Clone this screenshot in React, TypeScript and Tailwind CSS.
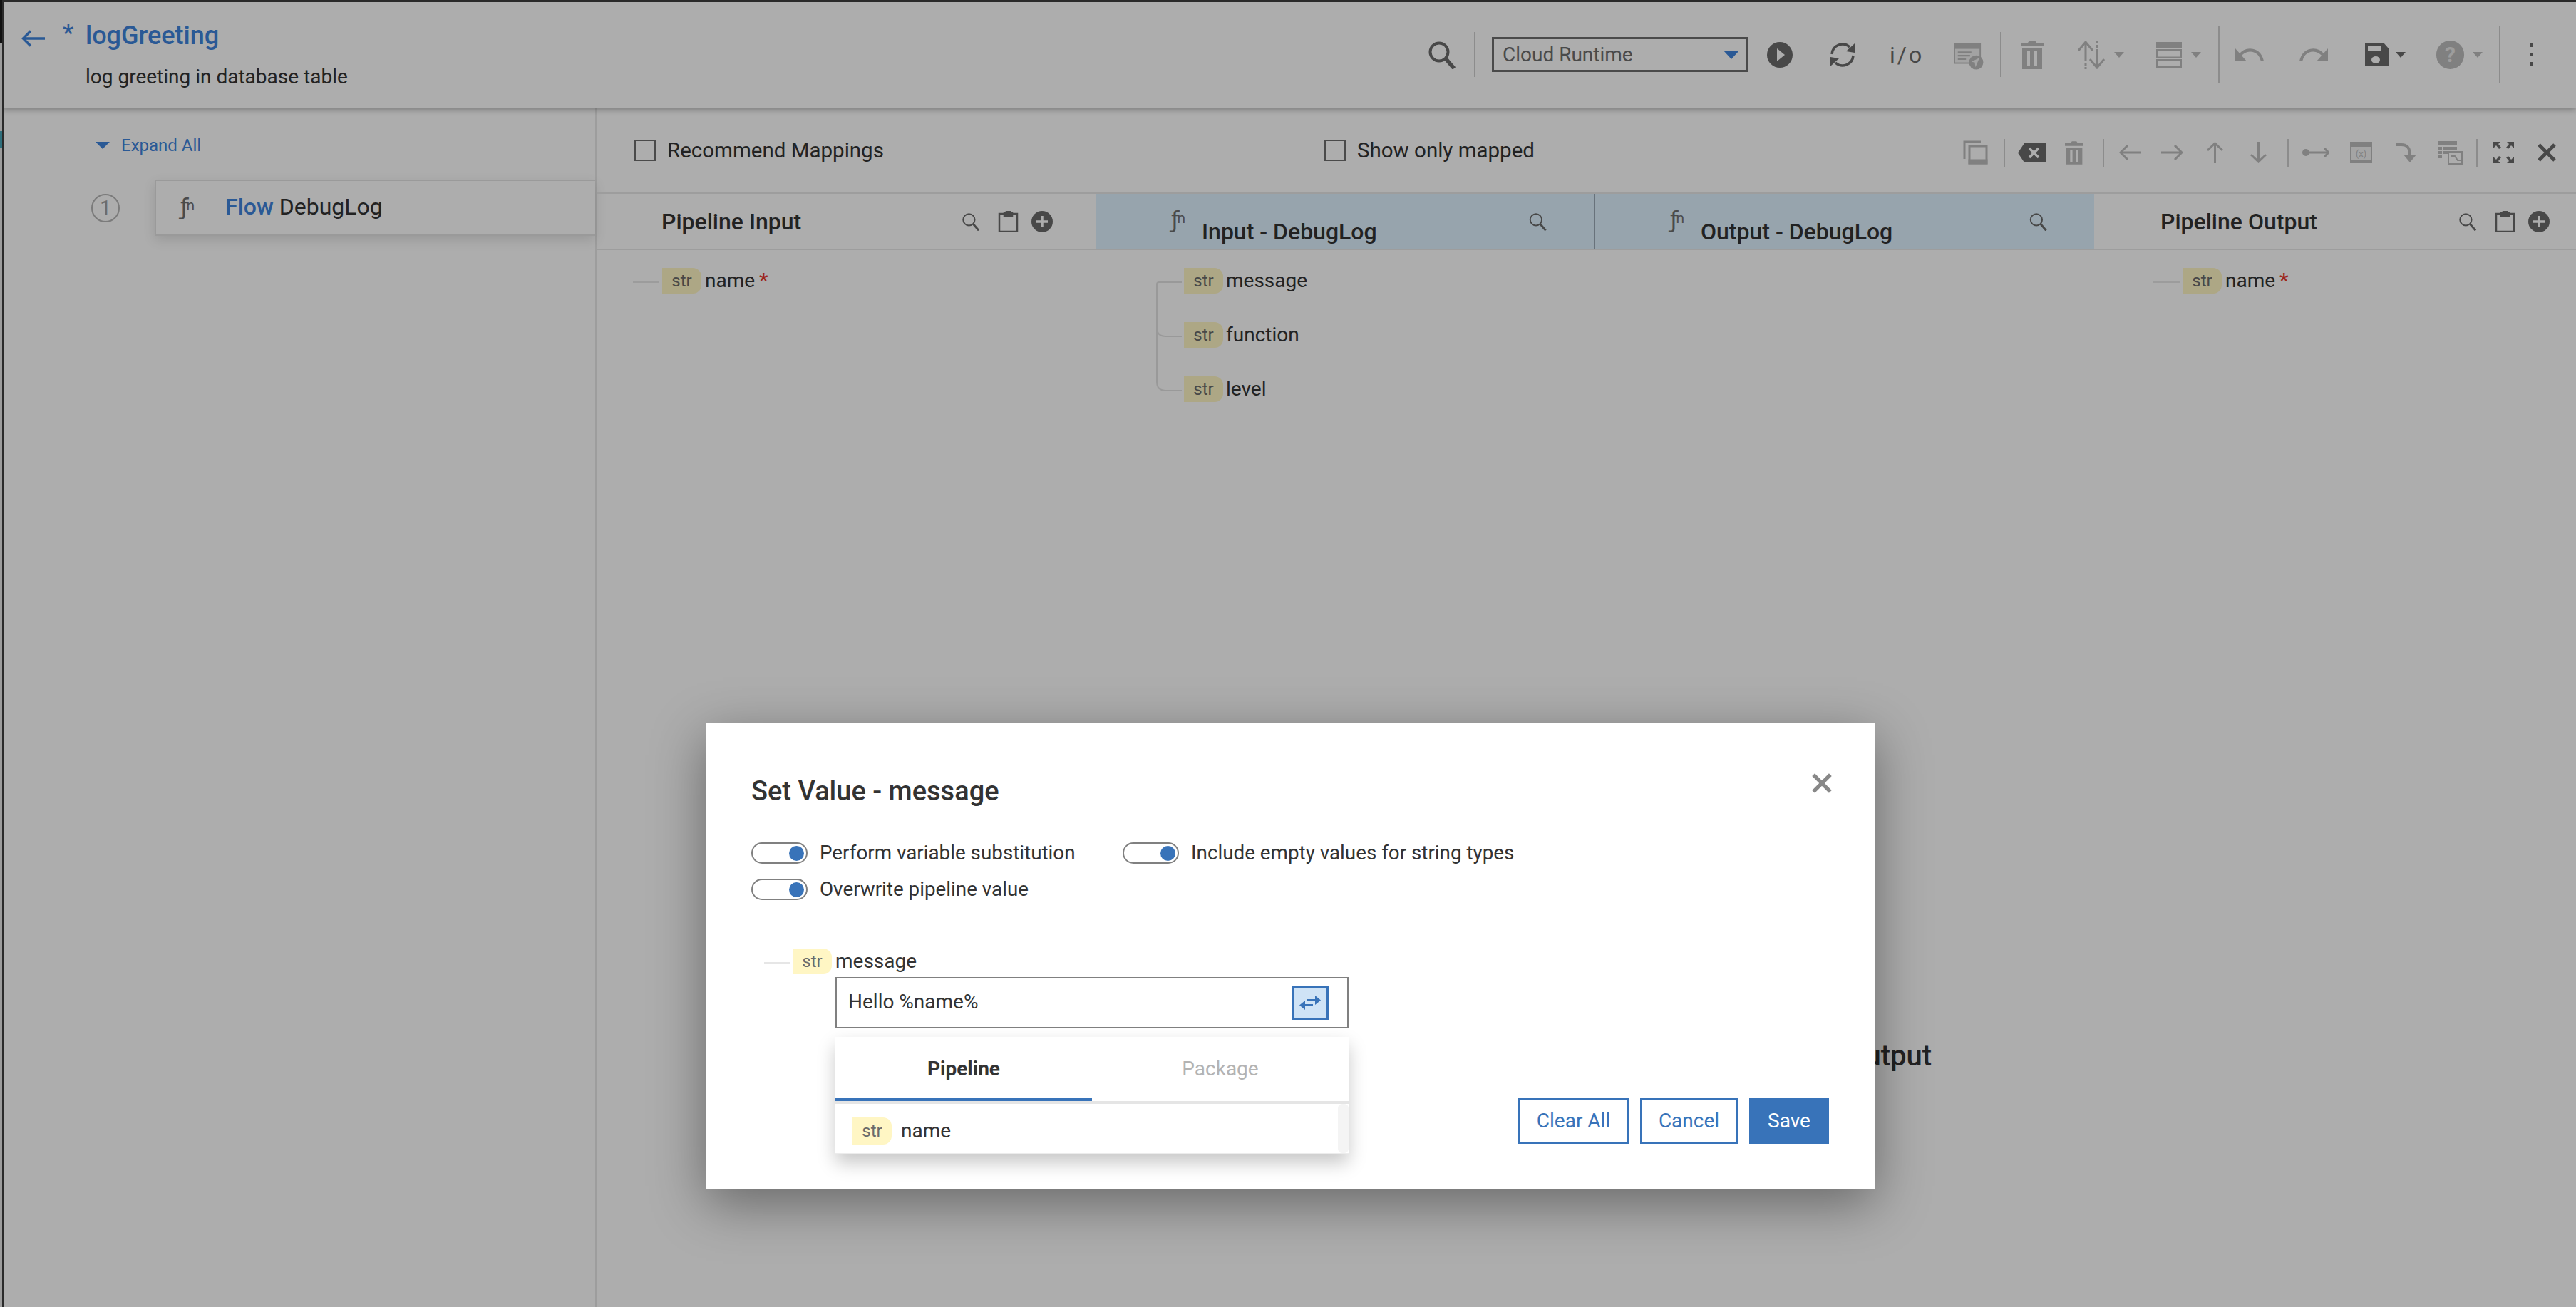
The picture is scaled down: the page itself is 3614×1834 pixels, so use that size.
import React from 'react';

type IconProps = { className?: string };

const DARK = '#6b6b6b';
const MUTED = '#bdbdbd';

const SearchIcon = ({ className, color = DARK, sw = 4 }: IconProps & { color?: string; sw?: number }) => (
    <svg className={className} viewBox="0 0 40 40" fill="none" stroke={color}>
        <circle cx="16" cy="16" r="12.5" strokeWidth={sw} />
        <path d="M25 25 L37 39" strokeWidth={sw + 1.5} />
    </svg>
);

const PlayIcon = ({ className }: IconProps) => (
    <svg className={className} viewBox="0 0 36 36">
        <circle cx="18" cy="18" r="18" fill={DARK} />
        <path d="M14 9 L25 18 L14 27 Z" fill="#ffffff" />
    </svg>
);

const RefreshIcon = ({ className }: IconProps) => (
    <svg className={className} viewBox="0 0 36 38">
        <path d="M3 18 A15 15 0 0 1 28 8" fill="none" stroke={DARK} strokeWidth="3.5" />
        <path d="M35 3 L35 16 L23 14 Z" fill={DARK} />
        <path d="M33 20 A15 15 0 0 1 8 30" fill="none" stroke={DARK} strokeWidth="3.5" />
        <path d="M1 35 L1 22 L13 24 Z" fill={DARK} />
    </svg>
);

const DeployIcon = ({ className }: IconProps) => (
    <svg className={className} viewBox="0 0 43 40">
        <rect x="0" y="0" width="40" height="30" fill={MUTED} />
        <rect x="2" y="8" width="36" height="20" fill="#f0f0f0" />
        <path d="M6 13 H26 M6 18 H24 M6 23 H18" stroke={MUTED} strokeWidth="2.5" />
        <circle cx="33" cy="28" r="10.5" fill={MUTED} />
        <path d="M38 21 L32 35 L31 28 L26 27 Z" fill="#f0f0f0" />
    </svg>
);

const TrashIcon = ({ className }: IconProps) => (
    <svg className={className} viewBox="0 0 32 40" fill={MUTED}>
        <path d="M12 0 H20 L22 3 H32 V8 H0 V3 H10 Z" />
        <path fillRule="evenodd" d="M2 11 H30 V40 H2 Z M9 15 V36 H13 V15 Z M19 15 V36 H23 V15 Z" />
    </svg>
);

const SortIcon = ({ className }: IconProps) => (
    <svg className={className} viewBox="0 0 39 40" fill="none" stroke={MUTED} strokeWidth="3">
        <path d="M11 3 V28" />
        <path d="M1 14 L11 2 L21 14" />
        <path d="M11 31 V40" strokeDasharray="4 2" />
        <path d="M27 0 V10" strokeDasharray="4 2" />
        <path d="M27 12 V37" />
        <path d="M17 26 L27 38 L37 26" />
    </svg>
);

const Caret = ({ className, color = MUTED }: IconProps & { color?: string }) => (
    <svg className={className} viewBox="0 0 14 8" preserveAspectRatio="none">
        <path d="M0 0 H14 L7 8 Z" fill={color} />
    </svg>
);

const RowsIcon = ({ className }: IconProps) => (
    <svg className={className} viewBox="0 0 36 36">
        <rect x="0" y="0" width="36" height="8" fill={MUTED} />
        <rect x="1" y="11" width="34" height="10.5" fill="none" stroke={MUTED} strokeWidth="2" />
        <rect x="1" y="25" width="34" height="10" fill="none" stroke={MUTED} strokeWidth="2" />
    </svg>
);

const UndoIcon = ({ className, flip }: IconProps & { flip?: boolean }) => (
    <svg className={className} viewBox="0 0 40 18">
        <g transform={flip ? 'translate(40 0) scale(-1 1)' : undefined}>
            <path d="M0 0 L0 18 L16 18 Z" fill={MUTED} />
            <path d="M6 10 C16 -2 34 0 38 18" fill="none" stroke={MUTED} strokeWidth="4" />
        </g>
    </svg>
);

const SaveIcon = ({ className }: IconProps) => (
    <svg className={className} viewBox="0 0 33 33">
        <path d="M0 0 H26 L33 8 V33 H0 Z" fill={DARK} />
        <rect x="4" y="4" width="19" height="8" fill="#ffffff" />
        <ellipse cx="15" cy="24" rx="6" ry="5" fill="#ffffff" />
    </svg>
);

const ClipboardIcon = ({ className }: IconProps) => (
    <svg className={className} viewBox="0 0 29 30" fill="none" stroke={DARK} strokeWidth="2.5">
        <rect x="2" y="4" width="25" height="25" />
        <path d="M9 3 H12 V1 H17 V3 H20 V7 H9 Z" fill={DARK} />
    </svg>
);

const PlusIcon = ({ className }: IconProps) => (
    <svg className={className} viewBox="0 0 30 30">
        <circle cx="15" cy="15" r="15" fill={DARK} />
        <path d="M15 7 V23 M7 15 H23" stroke="#ffffff" strokeWidth="3.5" />
    </svg>
);

const CopyIcon = ({ className }: IconProps) => (
    <svg className={className} viewBox="0 0 35 34" fill="none" stroke={MUTED} strokeWidth="3">
        <path d="M2 26 V2 H25" />
        <rect x="9" y="8" width="24" height="24" />
        <path d="M9 28 H33 V32 H9 Z" fill={MUTED} />
    </svg>
);

const BackspaceIcon = ({ className }: IconProps) => (
    <svg className={className} viewBox="0 0 39 27">
        <path d="M9 0 H39 V27 H9 L0 13.5 Z" fill={DARK} />
        <path d="M16 7 L29 20 M29 7 L16 20" stroke="#ffffff" strokeWidth="3.5" />
    </svg>
);

const HArrow = ({ className, d }: IconProps & { d: string }) => (
    <svg className={className} viewBox="0 0 31 22" fill="none" stroke={MUTED} strokeWidth="3">
        <path d={d} />
    </svg>
);

const VArrow = ({ className, d }: IconProps & { d: string }) => (
    <svg className={className} viewBox="0 0 25 30" fill="none" stroke={MUTED} strokeWidth="3">
        <path d={d} />
    </svg>
);

const LinkIcon = ({ className }: IconProps) => (
    <svg className={className} viewBox="0 0 37 12">
        <circle cx="5" cy="6" r="5" fill={MUTED} />
        <path d="M5 6 H34" stroke={MUTED} strokeWidth="3" />
        <path d="M31 0 L37 6 L31 12" fill="none" stroke={MUTED} strokeWidth="3" />
    </svg>
);

const VariableIcon = ({ className }: IconProps) => (
    <svg className={className} viewBox="0 0 31 30">
        <rect x="0" y="0" width="31" height="30" fill={MUTED} />
        <rect x="2" y="7" width="27" height="18" fill="#f2f2f2" />
        <text x="15.5" y="21" textAnchor="middle" fontSize="13" fontFamily="Roboto, sans-serif" fill={MUTED}>(x)</text>
    </svg>
);

const CurveIcon = ({ className }: IconProps) => (
    <svg className={className} viewBox="0 0 30 28">
        <path d="M0 3 H8 C17 3 20 8 20 18" fill="none" stroke={MUTED} strokeWidth="4" />
        <path d="M11 17 H29 L20 28 Z" fill={MUTED} />
    </svg>
);

const TableIcon = ({ className }: IconProps) => (
    <svg className={className} viewBox="0 0 34 33">
        <path d="M0 0 H26 V6 H0 Z M0 8 H5 V12 H0 Z M7 8 H26 V12 H7 Z M0 14 H5 V18 H0 Z M7 14 H15 V18 H7 Z M0 20 H5 V24 H0 Z" fill={MUTED} />
        <rect x="14" y="15" width="19" height="17" fill="#ffffff" stroke={MUTED} strokeWidth="2" />
        <path d="M18 21 L23 21 L27 27 L31 27" fill="none" stroke={MUTED} strokeWidth="2" />
    </svg>
);

const ExpandIcon = ({ className }: IconProps) => (
    <svg className={className} viewBox="0 0 29 30" fill={DARK}>
        <path d="M0 0 H10 L7 3 L11 8 L8 10 L4 5 L0 9 Z" />
        <path d="M29 0 H19 L22 3 L18 8 L21 10 L25 5 L29 9 Z" />
        <path d="M0 30 H10 L7 27 L11 22 L8 20 L4 25 L0 21 Z" />
        <path d="M29 30 H19 L22 27 L18 22 L21 20 L25 25 L29 21 Z" />
    </svg>
);

const CloseIcon = ({ className, color = DARK, sw = 5 }: IconProps & { color?: string; sw?: number }) => (
    <svg className={className} viewBox="0 0 26 26" fill="none" stroke={color} strokeWidth={sw}>
        <path d="M2 2 L24 24 M24 2 L2 24" />
    </svg>
);

const SwapIcon = ({ className }: IconProps) => (
    <svg className={className} viewBox="0 0 32 24" fill="#3873b9">
        <path d="M12 7 H23 V2 L31 8.5 L23 15 V10 H12 Z" />
        <path d="M20 14 H9 V9 L1 15.5 L9 22 V17 H20 Z" />
    </svg>
);

const FnIcon = ({ className }: IconProps) => (
    <span className={`flex items-start text-[#6e6e6e] font-['DejaVu_Sans',sans-serif] ${className ?? ''}`}>
        <span className="text-[32px] leading-[32px]">ƒ</span>
        <span className="text-[19px] leading-[20px] mt-[4px] -ml-[3px]">n</span>
    </span>
);

const Divider = ({ className }: IconProps) => <span className={`w-[2px] bg-[#cfcfcf] ${className ?? ''}`} />;

const Str = ({ className }: IconProps) => (
    <span className={`w-[55px] h-[36px] flex items-center justify-center rounded-r-[12px] bg-[#fff6c4] text-[24px] text-[#6b6b6b] ${className ?? ''}`}>str</span>
);

const Toggle = ({ label, className }: IconProps & { label: string }) => (
    <div className={`flex items-center ${className ?? ''}`}>
        <span className="w-[79px] h-[30px] rounded-full border-2 border-[#808080] flex items-center justify-end pr-[3px]">
            <span className="w-[21px] h-[21px] rounded-full bg-[#3873b9]" />
        </span>
        <span className="ml-[17px] text-[27.8px] leading-[32px] text-[#333]">{label}</span>
    </div>
);

const Checkbox = ({ label, className }: IconProps & { label: string }) => (
    <label className={`flex items-center ${className ?? ''}`}>
        <span className="w-[30px] h-[30px] border-2 border-[#6e6e6e] bg-white" />
        <span className="ml-[16px] text-[29.5px] leading-[36px] text-[#333]">{label}</span>
    </label>
);

const ColHeader = ({ title, pl }: { title: string; pl: string }) => (
    <div className={`h-full flex items-center bg-[#dff2ff] ${pl}`}>
        <FnIcon className="w-[22px] h-[32px] mb-[6px]" />
        <span className="ml-[21px] mt-[28px] text-[32px] leading-[40px] font-medium text-[#333]">{title}</span>
        <SearchIcon className="ml-auto mr-[65px] w-[27px] h-[26px]" sw={3} />
    </div>
);

const PipelineHeader = ({ title, pl, pr }: { title: string; pl: string; pr: string }) => (
    <div className={`h-full flex items-center ${pl} ${pr}`}>
        <span className="text-[32px] leading-[40px] font-medium text-[#333]">{title}</span>
        <SearchIcon className="ml-auto w-[26px] h-[26px]" sw={3} />
        <ClipboardIcon className="ml-[25px] w-[29px] h-[30px]" />
        <PlusIcon className="ml-[18px] w-[30px] h-[30px]" />
    </div>
);

const PipelineRow = ({ pl }: { pl: string }) => (
    <div className={`flex items-center self-start pt-[25px] ${pl}`}>
        <span className="w-[37px] h-[2px] bg-[#e6e6e6] mt-[4px]" />
        <Str className="ml-[4px]" />
        <span className="ml-[5px] text-[28px] leading-[36px] text-[#333]">name</span>
        <span className="ml-[6px] text-[28px] leading-[36px] font-medium text-[#e8362a]">*</span>
    </div>
);

const inputFields = ['message', 'function', 'level'];

export default function App() {
    return (
        <div className="relative w-[3614px] h-[1834px] overflow-hidden bg-white font-['Roboto',sans-serif] pt-[3px] pl-[3px]">
            <div className="relative z-10 h-[149px] flex items-start bg-white shadow-[0_2px_8px_rgba(0,0,0,0.3)]">
                <svg className="ml-[27px] mt-[39px] w-[33px] h-[24px]" viewBox="0 0 33 24" fill="none" stroke="#3e84dc" strokeWidth="3.5">
                    <path d="M33 12 H3 M13 1.5 L2.5 12 L13 22.5" />
                </svg>
                <span className="ml-[25px] mt-[22px] w-[32px] text-[36px] leading-[44px] text-[#3e84dc]">*</span>
                <div className="pt-[25px]">
                    <div className="text-[36px] leading-[44px] font-medium text-[#3e84dc]">logGreeting</div>
                    <div className="mt-[18px] text-[28px] leading-[36px] text-[#333]">log greeting in database table</div>
                </div>

                <div className="ml-auto h-full flex items-center pr-[60px] pb-[2px]">
                    <SearchIcon className="w-[40px] h-[40px]" />
                    <Divider className="ml-[25px] h-[63px]" />
                    <div className="ml-[23px] w-[360px] h-[49px] border-[3px] border-[#6e6e6e] flex items-center pl-[12px] pr-[10px]">
                        <span className="text-[28px] text-[#6e6e6e]">Cloud Runtime</span>
                        <Caret className="ml-auto w-[22px] h-[12px]" color="#3e84dc" />
                    </div>
                    <PlayIcon className="ml-[26px] w-[36px] h-[36px]" />
                    <RefreshIcon className="ml-[52px] w-[36px] h-[38px]" />
                    <span className="ml-[48px] w-[46px] text-[32px] tracking-[3px] text-[#6b6b6b]">i/o</span>
                    <DeployIcon className="ml-[43px] mt-[6px] w-[43px] h-[38px]" />
                    <Divider className="ml-[23px] h-[63px]" />
                    <TrashIcon className="ml-[27px] w-[32px] h-[40px]" />
                    <SortIcon className="ml-[48px] w-[39px] h-[40px]" />
                    <Caret className="ml-[12px] w-[14px] h-[8px]" />
                    <RowsIcon className="ml-[45px] w-[36px] h-[36px]" />
                    <Caret className="ml-[13px] w-[14px] h-[8px]" />
                    <Divider className="ml-[24px] h-[80px]" />
                    <UndoIcon className="ml-[22px] w-[40px] h-[18px]" />
                    <UndoIcon className="ml-[50px] w-[40px] h-[18px]" flip />
                    <SaveIcon className="ml-[52px] w-[33px] h-[33px]" />
                    <Caret className="ml-[10px] w-[14px] h-[8px]" color={DARK} />
                    <span className="ml-[43px] w-[39px] h-[40px] rounded-full bg-[#bdbdbd] flex items-center justify-center text-[30px] font-bold text-[#e8e8e8]">?</span>
                    <Caret className="ml-[12px] w-[14px] h-[8px]" />
                    <Divider className="ml-[23px] h-[80px]" />
                    <span className="ml-[42px] w-[4px] flex flex-col gap-[8px]">
                        <span className="h-[5px] bg-[#6b6b6b]" />
                        <span className="h-[5px] bg-[#6b6b6b]" />
                        <span className="h-[5px] bg-[#6b6b6b]" />
                    </span>
                </div>
            </div>

            <div className="flex h-[1682px]">
                <aside className="w-[834px] shrink-0 border-r-2 border-[#e8e8e8] pt-[36px]">
                    <div className="flex items-center pl-[131px] h-[32px]">
                        <Caret className="w-[20px] h-[10px]" color="#3e84dc" />
                        <span className="ml-[16px] text-[24px] text-[#3e84dc]">Expand All</span>
                    </div>
                    <div className="mt-[32px] flex items-center pl-[125px]">
                        <span className="w-[40px] h-[40px] rounded-full border-2 border-[#b5b5b5] flex items-center justify-center text-[28px] text-[#a0a0a0]">1</span>
                        <div className="ml-[49px] flex-1 h-[79px] border-2 border-r-0 border-[#e4e4e4] bg-white flex items-center pl-[34px] pb-[3px] shadow-[0_6px_16px_rgba(0,0,0,0.12)]">
                            <FnIcon className="w-[22px] h-[32px]" />
                            <span className="ml-[41px] text-[32px] text-[#3e84dc] font-medium">Flow</span>
                            <span className="ml-[8px] text-[32px] text-[#333]">DebugLog</span>
                        </div>
                    </div>
                </aside>

                <main className="flex-1 flex flex-col">
                    <div className="h-[118px] shrink-0 flex items-center">
                        <Checkbox label="Recommend Mappings" className="ml-[53px] w-[968px]" />
                        <Checkbox label="Show only mapped" />
                        <div className="ml-auto flex items-center mt-[6px] pr-[28px]">
                            <CopyIcon className="w-[35px] h-[34px]" />
                            <Divider className="ml-[22px] h-[39px]" />
                            <BackspaceIcon className="ml-[18px] w-[39px] h-[27px]" />
                            <TrashIcon className="ml-[27px] w-[26px] h-[33px]" />
                            <Divider className="ml-[27px] h-[39px]" />
                            <HArrow className="ml-[21px] w-[31px] h-[22px]" d="M31 11 H2 M12 1 L2 11 L12 21" />
                            <HArrow className="ml-[28px] w-[31px] h-[22px]" d="M0 11 H29 M19 1 L29 11 L19 21" />
                            <VArrow className="ml-[32px] w-[25px] h-[30px]" d="M12.5 30 V2 M2 12 L12.5 2 L23 12" />
                            <VArrow className="ml-[36px] w-[25px] h-[30px]" d="M12.5 0 V28 M2 18 L12.5 28 L23 18" />
                            <Divider className="ml-[28px] h-[39px]" />
                            <LinkIcon className="ml-[19px] w-[37px] h-[12px]" />
                            <VariableIcon className="ml-[30px] w-[31px] h-[30px]" />
                            <CurveIcon className="ml-[33px] w-[30px] h-[28px]" />
                            <TableIcon className="ml-[30px] w-[34px] h-[33px]" />
                            <Divider className="ml-[19px] h-[39px]" />
                            <ExpandIcon className="ml-[22px] w-[29px] h-[30px]" />
                            <CloseIcon className="ml-[33px] w-[26px] h-[26px]" />
                        </div>
                    </div>

                    <div className="h-[81px] shrink-0 grid grid-cols-[701px_698px_702px_1fr] border-y-2 border-[#e8e8e8]">
                        <PipelineHeader title="Pipeline Input" pl="pl-[91px]" pr="pr-[61px]" />
                        <ColHeader title="Input - DebugLog" pl="pl-[105px]" />
                        <div className="h-full border-l-2 border-[#9aa9b5]">
                            <ColHeader title="Output - DebugLog" pl="pl-[105px]" />
                        </div>
                        <PipelineHeader title="Pipeline Output" pl="pl-[93px]" pr="pr-[37px]" />
                    </div>

                    <div className="flex-1 grid grid-cols-[701px_698px_702px_1fr]">
                        <PipelineRow pl="pl-[51px]" />
                        <div className="flex items-start pl-[84px] pt-[25px]">
                            <svg className="w-[36px] h-[172px]" viewBox="0 0 36 172" fill="none" stroke="#e2e2e2" strokeWidth="2">
                                <path d="M36 20 H4 Q1 20 1 23 V84 Q1 96 14 96 H36 M1 80 V160 Q1 172 14 172 H36" />
                            </svg>
                            <div className="ml-[3px] flex flex-col gap-[40px]">
                                {inputFields.map((field) => (
                                    <div key={field} className="flex items-center">
                                        <Str />
                                        <span className="ml-[4px] text-[28px] leading-[36px] text-[#333]">{field}</span>
                                    </div>
                                ))}
                            </div>
                        </div>
                        <div className="pt-[1107px] pr-[228px] text-right text-[40px] leading-[48px] font-medium text-[#333]">Output</div>
                        <PipelineRow pl="pl-[83px]" />
                    </div>
                </main>
            </div>

            {/* backdrop and dialog */}
            <div className="absolute inset-0 z-20 bg-black/[0.32]" />
            <div className="absolute z-30 top-0 inset-x-0 h-[3px] bg-[#2a2a2a]" />
            <div className="absolute z-30 left-0 inset-y-0 w-[3px] bg-[#9c9c9c]">
                <div className="h-[61px] bg-[#111]" />
                <div className="mt-[123px] h-[23px] bg-[#2f6f7c]" />
            </div>
            <div className="absolute z-30 left-[3px] inset-y-0 w-[1.5px] bg-[#2a2a2a]" />

            <div className="absolute z-30 left-[990px] top-[1015px] w-[1640px] h-[654px] bg-white px-[64px] pt-[73px] shadow-[0_20px_70px_rgba(0,0,0,0.4)]">
                <CloseIcon className="absolute right-[60px] top-[70px] w-[28px] h-[28px]" color="#888888" sw={5} />
                <h2 className="text-[38px] leading-[44px] font-medium text-[#333]">Set Value - message</h2>
                <div className="mt-[49px] flex">
                    <Toggle label="Perform variable substitution" className="w-[521px]" />
                    <Toggle label="Include empty values for string types" />
                </div>
                <Toggle label="Overwrite pipeline value" className="mt-[19px]" />

                <div className="mt-[67px] flex justify-between">
                    <div>
                        <div className="flex items-center pl-[18px]">
                            <span className="w-[37px] h-[2px] bg-[#e6e6e6] mt-[4px]" />
                            <Str className="ml-[3px]" />
                            <span className="ml-[5px] text-[28px] leading-[36px] text-[#333]">message</span>
                        </div>
                        <div className="ml-[118px] mt-[4px] w-[720px]">
                            <div className="h-[72px] border-2 border-[#808080] flex items-center pl-[16px] pr-[26px]">
                                <span className="text-[28px] text-[#333] mb-[3px]">Hello %name%</span>
                                <button className="ml-auto w-[52px] h-[48px] border-[3px] border-[#3873b9] bg-[#cfe3f6] flex items-center justify-center">
                                    <SwapIcon className="w-[32px] h-[24px]" />
                                </button>
                            </div>
                            <div className="mt-[12px] h-[165px] bg-white shadow-[0_12px_24px_rgba(0,0,0,0.22)]">
                                <div className="h-[90px] grid grid-cols-2 text-[28px]">
                                    <div className="flex items-center justify-center pt-[4px] font-bold text-[#333] border-b-4 border-[#3873b9]">Pipeline</div>
                                    <div className="flex items-center justify-center pt-[4px] text-[#b3b3b3] border-b-4 border-transparent">Package</div>
                                </div>
                                <div className="h-[4px] bg-[#e5e5e5]" />
                                <div className="h-[71px] flex border-b-2 border-[#ececec]">
                                    <div className="flex-1 flex items-center pl-[24px] pt-[6px]">
                                        <Str className="h-[38px]" />
                                        <span className="ml-[13px] text-[28px] text-[#333]">name</span>
                                    </div>
                                    <div className="w-[15px] bg-[#f4f4f4] rounded-[6px]" />
                                </div>
                            </div>
                        </div>
                    </div>
                    <div className="self-end mb-[15px] flex gap-[16px] text-[28px]">
                        <button className="w-[155px] h-[64px] border-2 border-[#3873b9] text-[#3873b9]">Clear All</button>
                        <button className="w-[137px] h-[64px] border-2 border-[#3873b9] text-[#3873b9]">Cancel</button>
                        <button className="w-[112px] h-[64px] bg-[#3873b9] text-white">Save</button>
                    </div>
                </div>
            </div>
        </div>
    );
}
